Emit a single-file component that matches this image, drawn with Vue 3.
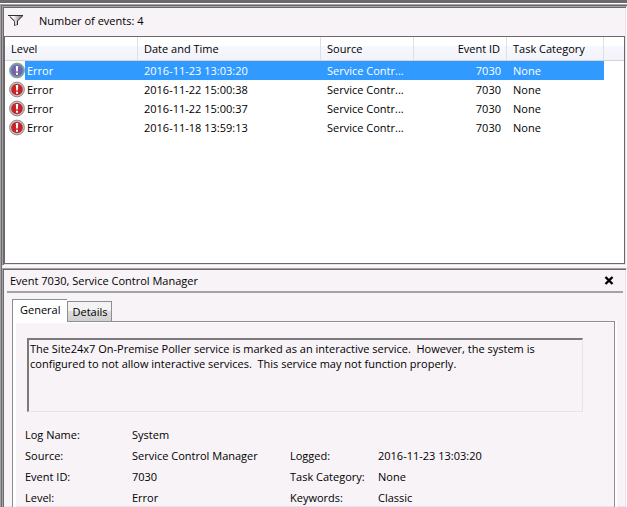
<script setup>
import { ref } from 'vue';

const columns = ['Level', 'Date and Time', 'Source', 'Event ID', 'Task Category'];

const events = [
  { id: 1, level: 'Error', date: '2016-11-23 13:03:20', source: 'Service Contr...', eventId: 7030, category: 'None' },
  { id: 2, level: 'Error', date: '2016-11-22 15:00:38', source: 'Service Contr...', eventId: 7030, category: 'None' },
  { id: 3, level: 'Error', date: '2016-11-22 15:00:37', source: 'Service Contr...', eventId: 7030, category: 'None' },
  { id: 4, level: 'Error', date: '2016-11-18 13:59:13', source: 'Service Contr...', eventId: 7030, category: 'None' },
];

const message =
  'The Site24x7 On-Premise Poller service is marked as an interactive service.  However, the system is ' +
  'configured to not allow interactive services.  This service may not function properly.';

const selected = ref(1);
const activeTab = ref('General');
</script>

<template>
  <main class="viewer">
    <div class="frame">
      <section class="pane events-pane">
        <div class="toolbar">
          <svg class="filter-icon" width="16" height="13" viewBox="0 0 16 13">
            <defs>
              <linearGradient id="funnel">
                <stop offset="0.3" stop-color="#fff" />
                <stop offset="0.9" stop-color="#848284" />
              </linearGradient>
            </defs>
            <path d="M1 1.5H14.5L9.5 6.5V10.5L6.5 11.5V6.5Z" fill="url(#funnel)" stroke="#848284" />
            <path d="M0 1.5H15M14.5 2L9.5 7V11" fill="none" stroke="#312f31" />
            <path d="M2 3L6.5 7.5V12" fill="none" stroke="#525152" />
          </svg>
          <span>Number of events: {{ events.length }}</span>
        </div>
        <div class="list">
          <table class="events">
            <colgroup>
              <col class="col-level" />
              <col class="col-date" />
              <col class="col-source" />
              <col class="col-id" />
              <col class="col-category" />
              <col />
            </colgroup>
            <thead>
              <tr>
                <th v-for="name in columns" :key="name" :class="{ number: name === 'Event ID' }">{{ name }}</th>
                <th></th>
              </tr>
            </thead>
            <tbody>
              <tr
                v-for="event in events"
                :key="event.id"
                :class="{ selected: event.id === selected }"
                @click="selected = event.id"
              >
                <td class="level">
                  <div class="level-cell">
                    <svg class="level-icon" width="16" height="17" viewBox="0 0 16 17">
                      <circle class="ring" cx="8" cy="8.5" r="7.4" />
                      <circle class="disc" cx="8" cy="8.5" r="5.8" />
                      <path d="M6.8 4H9.2L8.8 9.5H7.2ZM7 10.8H9V12.8H7Z" fill="#fff" />
                    </svg>
                    <span class="level-name">{{ event.level }}</span>
                  </div>
                </td>
                <td>{{ event.date }}</td>
                <td>{{ event.source }}</td>
                <td class="number">{{ event.eventId }}</td>
                <td>{{ event.category }}</td>
                <td class="filler"></td>
              </tr>
            </tbody>
          </table>
        </div>
      </section>

      <section class="pane detail-pane">
        <header class="detail-header">
          <span>Event 7030, Service Control Manager</span>
          <button class="close" aria-label="Close">
            <svg width="10" height="9" viewBox="0 0 10 9">
              <path d="M1.5 1L8.5 8M8.5 1L1.5 8" stroke="#000" stroke-width="2.4" />
            </svg>
          </button>
        </header>
        <div class="tabs">
          <button
            v-for="tab in ['General', 'Details']"
            :key="tab"
            class="tab"
            :class="{ active: tab === activeTab }"
            @click="activeTab = tab"
          >
            {{ tab }}
          </button>
        </div>
        <div class="tab-panel">
          <textarea class="message" readonly aria-label="Event description" :value="message"></textarea>
          <div class="fields">
            <span>Log Name:</span><span class="wide">System</span>
            <span>Source:</span><span>Service Control Manager</span>
            <span>Logged:</span><span>2016-11-23 13:03:20</span>
            <span>Event ID:</span><span>7030</span>
            <span>Task Category:</span><span>None</span>
            <span>Level:</span><span>Error</span>
            <span>Keywords:</span><span>Classic</span>
          </div>
        </div>
      </section>
    </div>
  </main>
</template>

<style>
body {
  margin: 0;
  background: #f7f3f7;
}
</style>

<style scoped>
.viewer {
  display: flex;
  flex-direction: column;
  min-height: 100vh;
  box-sizing: border-box;
  border-top: 3px solid #6b696b;
  background: #f7f3f7;
  color: #000;
  font: 11px/15px "Open Sans", sans-serif;
}

.frame {
  flex: 1;
  display: flex;
  flex-direction: column;
  gap: 2px;
  margin-top: 1px;
  border: solid #a5a2a5;
  border-width: 1px 0 0 1px;
  box-shadow: inset 1px 1px #6b696b, 0 -1px #fff;
  padding: 1px 0 0 1px;
}

/* sunken two-tone edge */
.pane {
  border: 1px solid #a5a2a5;
  border-right-color: #fff;
  border-bottom-color: #fff;
  box-shadow: inset 1px 1px #6b696b, inset -1px -1px #e7e3e7;
  padding: 1px;
}

.toolbar {
  display: flex;
  align-items: center;
  gap: 15px;
  height: 28px;
  padding: 0 4px 4px;
  box-sizing: border-box;
}

.list {
  height: 226px;
  border: 1px solid #6b696b;
  background: #fff;
}

.events {
  width: 100%;
  table-layout: fixed;
  border-collapse: separate;
  border-spacing: 0;
}

.col-level {
  width: 133px;
}

.col-date {
  width: 183px;
}

.col-source {
  width: 93px;
}

.col-id {
  width: 93px;
}

.col-category {
  width: 97px;
}

th {
  height: 24px;
  padding: 0 6px;
  box-sizing: border-box;
  border-right: 1px solid #dedfe7;
  border-bottom: 1px solid #d6d3d6;
  background: linear-gradient(#fff 40%, #f7f7ff 40%, #f3f3f9);
  font-weight: normal;
  text-align: left;
  white-space: nowrap;
}

th:last-child {
  border-right: none;
}

td {
  height: 19px;
  padding: 0 6px;
  white-space: nowrap;
}

th.number,
td.number {
  text-align: right;
}

td.level {
  padding: 0 0 0 4px;
}

.level-cell {
  display: flex;
  height: 19px;
}

.level-icon {
  flex: none;
  align-self: center;
}

.level-name {
  flex: 1;
  padding-left: 2px;
  line-height: 19px;
}

.ring {
  fill: #c6c3c6;
  stroke: #8c8a8c;
}

.disc {
  fill: #c62429;
}

.selected td:not(.level):not(.filler),
.selected .level-name {
  background: #319aff;
  color: #fff;
}

.selected .ring {
  fill: #6b9ad6;
  stroke: #84aa6b;
}

.selected .disc {
  fill: #7b61a5;
}

.detail-pane {
  flex: 1;
  display: flex;
  flex-direction: column;
  padding: 1px 3px 0 4px;
  border-bottom: none;
}

.detail-header {
  display: flex;
  align-items: center;
  justify-content: space-between;
  height: 21px;
  padding: 0 6px 0 3px;
  border-bottom: 2px solid #a5a2a5;
}

.close {
  display: flex;
  align-items: center;
  justify-content: center;
  width: 16px;
  height: 16px;
  padding: 0;
  border: none;
  background: none;
}

.tabs {
  position: relative;
  display: flex;
  align-items: flex-end;
  margin: 6px 0 0 5px;
}

.tab {
  height: 20px;
  padding: 0 4px;
  border: 1px solid #8c8e94;
  border-bottom: none;
  background: linear-gradient(#f3f3f3 50%, #dedbde 50%, #d0d0d0);
  color: #000;
  font: inherit;
}

.tab.active {
  height: 23px;
  margin-bottom: -1px;
  padding: 0 7px 3px;
  border-right: none;
  background: #fff;
}

.tab-panel {
  flex: 1;
  margin: 0 8px 0 5px;
  padding: 16px 31px 0 12px;
  border: 1px solid #8c8e94;
  border-bottom: none;
  box-shadow: inset 3px 1px #fff, 2px 0 #fff;
}

.message {
  display: block;
  width: calc(100% - 2px);
  height: 74px;
  margin: 0 0 0 2px;
  padding: 1px 0 0 1px;
  box-sizing: border-box;
  border: 2px solid #7b797b;
  border-right: 1px solid #e7e3e7;
  border-bottom: 1px solid #e7e3e7;
  outline: none;
  background: transparent;
  color: #000;
  font: inherit;
  resize: none;
}

.fields {
  display: grid;
  grid-template-columns: 107px 158px 88px 1fr;
  row-gap: 6px;
  margin-top: 15px;
  white-space: nowrap;
}

.wide {
  grid-column: 2 / -1;
}
</style>
